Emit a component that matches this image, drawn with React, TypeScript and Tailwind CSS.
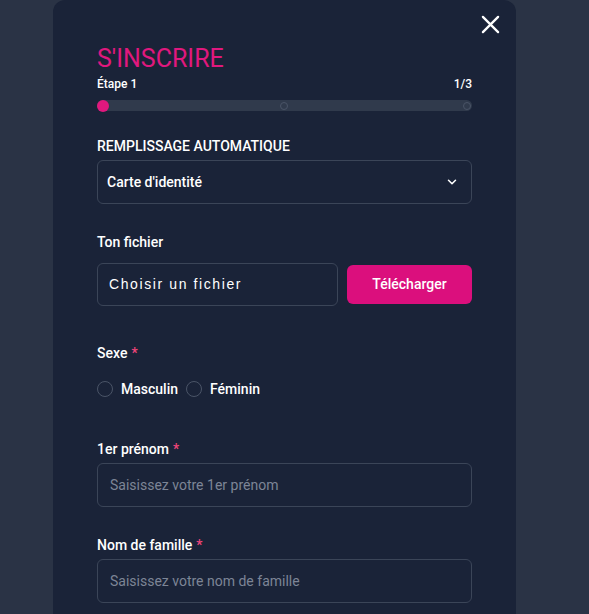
import React from "react";

function Label({ children, required }: { children: React.ReactNode; required?: boolean }) {
  return (
    <div className="text-[14px] leading-5 font-medium text-white">
      {children}
      {required && <span className="text-[#f0457a] ml-1">*</span>}
    </div>
  );
}

export default function App() {
  return (
    <div
      className="w-[589px] h-[614px] bg-[#2a3345] overflow-hidden"
      style={{ fontFamily: "Roboto, 'Liberation Sans', sans-serif" }}
    >
      <div className="relative ml-[53px] w-[463px] h-[614px] bg-[#1a2338] rounded-t-[12px] px-[44px] pt-[44px]">
        <button className="absolute top-[15px] right-[16px] w-[19px] h-[19px] text-white">
          <svg viewBox="0 0 20 20" width="19" height="19" fill="none" stroke="currentColor" strokeWidth="2.4" strokeLinecap="round">
            <path d="M2 2 L18 18 M18 2 L2 18" />
          </svg>
        </button>

        <h1 className="text-[25px] leading-[30px] font-normal text-[#e0187e]">S'INSCRIRE</h1>
        <div className="flex justify-between text-[12px] leading-4 font-medium text-white mt-[2px]">
          <span>Étape 1</span>
          <span>1/3</span>
        </div>
        <div className="relative mt-2 h-[11px] w-[375px] rounded-full bg-[#303a4c]">
          <div className="absolute left-0 top-[-0.5px] w-[12px] h-[12px] rounded-full bg-[#e0187e]" />
          <div className="absolute left-[183px] top-[1.5px] w-[8px] h-[8px] rounded-full border border-[#4a5467]" />
          <div className="absolute right-[1px] top-[1.5px] w-[8px] h-[8px] rounded-full border border-[#4a5467]" />
        </div>

        <div className="mt-[25px]">
          <Label>REMPLISSAGE AUTOMATIQUE</Label>
          <div className="mt-1 h-[44px] w-[375px] rounded-[6px] border border-[#3b4558] flex items-center justify-between pl-[9px] pr-[12px] text-[14px] font-medium text-white">
            <span>Carte d'identité</span>
            <svg viewBox="0 0 24 24" width="14" height="14" fill="none" stroke="currentColor" strokeWidth="2.6" strokeLinecap="round" strokeLinejoin="round">
              <path d="M6 9l6 6 6-6" />
            </svg>
          </div>
        </div>

        <div className="mt-[28px]">
          <Label>Ton fichier</Label>
          <div className="mt-[11px] flex items-center gap-[9px]">
            <div
              className="h-[43px] w-[241px] rounded-[6px] border border-[#3b4558] flex items-center pl-[11px] text-[14px] text-white tracking-[1.6px]"
              style={{ fontFamily: "'Liberation Sans', Arial, sans-serif" }}
            >
              Choisir un fichier
            </div>
            <button className="h-[39px] w-[125px] rounded-[6px] bg-[#db0f7d] text-white text-[14px] font-medium">
              Télécharger
            </button>
          </div>
        </div>

        <div className="mt-[37px]">
          <Label required>Sexe</Label>
          <div className="mt-[16px] flex items-center text-[14px] leading-5 font-medium text-white">
            <span className="w-[16px] h-[16px] rounded-full border border-[#4a5467]" />
            <span className="ml-[8px]">Masculin</span>
            <span className="ml-[8px] w-[16px] h-[16px] rounded-full border border-[#4a5467]" />
            <span className="ml-[8px]">Féminin</span>
          </div>
        </div>

        <div className="mt-[40px]">
          <Label required>1er prénom</Label>
          <div className="mt-1 h-[44px] w-[375px] rounded-[6px] border border-[#3b4558] flex items-center pl-[12px] text-[14px] text-[#7d8596]">
            Saisissez votre 1er prénom
          </div>
        </div>

        <div className="mt-[28px]">
          <Label required>Nom de famille</Label>
          <div className="mt-1 h-[44px] w-[375px] rounded-[6px] border border-[#3b4558] flex items-center pl-[12px] text-[14px] text-[#7d8596]">
            Saisissez votre nom de famille
          </div>
        </div>
      </div>
    </div>
  );
}
